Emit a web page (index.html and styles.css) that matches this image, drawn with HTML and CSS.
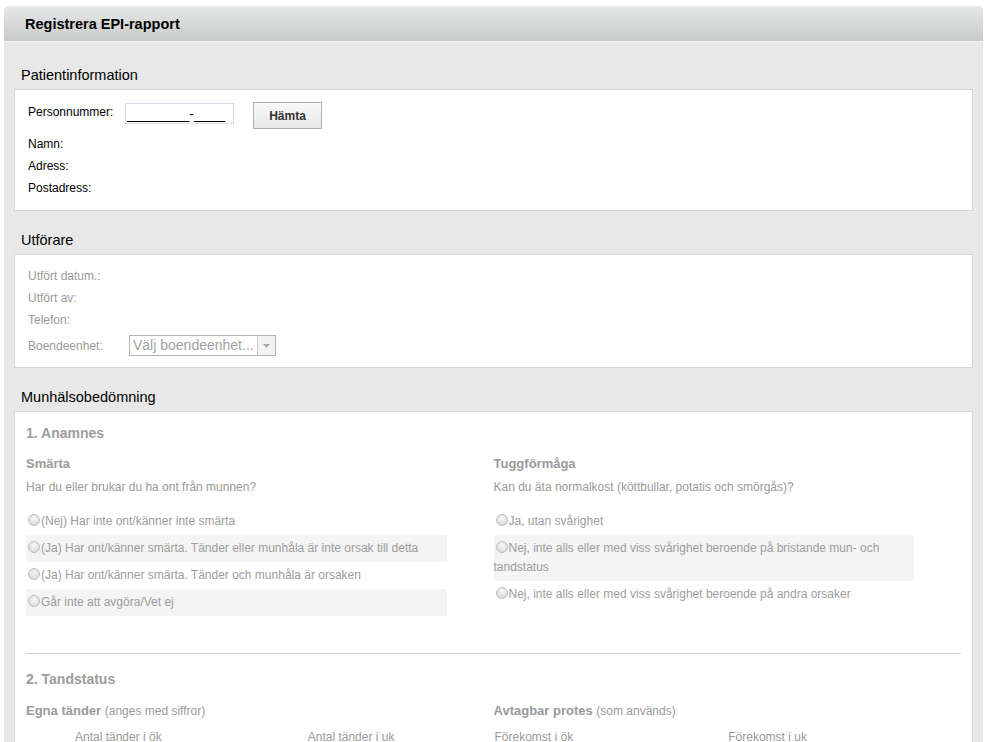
FILE: index.html
```html
<!DOCTYPE html>
<html lang="sv">
<head>
<meta charset="utf-8">
<title>Registrera EPI-rapport</title>
<link rel="stylesheet" href="styles.css">
</head>
<body>
<div class="panel">
  <div class="panel-header">Registrera EPI-rapport</div>
  <div class="panel-body">
    <h2 class="section-title first">Patientinformation</h2>
    <div class="box box-patient">
      <div class="pn-row">
        <label class="pn-label" for="pnr">Personnummer:</label>
        <input id="pnr" class="pn-input" type="text" value="________-____">
        <button class="btn" type="button">Hämta</button>
      </div>
      <div class="info-line">Namn:</div>
      <div class="info-line">Adress:</div>
      <div class="info-line">Postadress:</div>
    </div>

    <h2 class="section-title">Utförare</h2>
    <div class="box box-performer">
      <div class="info-line muted">Utfört datum.:</div>
      <div class="info-line muted">Utfört av:</div>
      <div class="info-line muted">Telefon:</div>
      <div class="unit-row">
        <span class="unit-label">Boendeenhet:</span>
        <div class="select">
          <span class="select-text">Välj boendeenhet...</span>
          <span class="select-arrow"><svg width="7" height="4" viewBox="0 0 7 4"><path d="M0 0H7L3.5 4Z" fill="#a8a8a8"/></svg></span>
        </div>
      </div>
    </div>

    <h2 class="section-title">Munhälsobedömning</h2>
    <div class="box box-assess">
      <h3 class="part-title">1. Anamnes</h3>
      <div class="cols">
        <div class="col">
          <h4 class="q-title">Smärta</h4>
          <p class="q-text">Har du eller brukar du ha ont från munnen?</p>
          <div class="options">
            <label class="opt"><input class="radio" type="radio" name="smarta">(Nej) Har inte ont/känner inte smärta</label>
            <label class="opt alt"><input class="radio" type="radio" name="smarta">(Ja) Har ont/känner smärta. Tänder eller munhåla är inte orsak till detta</label>
            <label class="opt"><input class="radio" type="radio" name="smarta">(Ja) Har ont/känner smärta. Tänder och munhåla är orsaken</label>
            <label class="opt alt"><input class="radio" type="radio" name="smarta">Går inte att avgöra/Vet ej</label>
          </div>
        </div>
        <div class="col">
          <h4 class="q-title">Tuggförmåga</h4>
          <p class="q-text">Kan du äta normalkost (köttbullar, potatis och smörgås)?</p>
          <div class="options">
            <label class="opt"><input class="radio" type="radio" name="tugg">Ja, utan svårighet</label>
            <label class="opt alt"><input class="radio" type="radio" name="tugg">Nej, inte alls eller med viss svårighet beroende på bristande mun- och tandstatus</label>
            <label class="opt"><input class="radio" type="radio" name="tugg">Nej, inte alls eller med viss svårighet beroende på andra orsaker</label>
          </div>
        </div>
      </div>

      <hr class="divider">

      <h3 class="part-title part-two">2. Tandstatus</h3>
      <div class="cols">
        <div class="col">
          <h4 class="q-title q-title-two">Egna tänder <span class="hint">(anges med siffror)</span></h4>
          <div class="sub-cols indented">
            <div class="sub">
              <div class="sub-label">Antal tänder i ök</div>
              <input class="num-input" type="text">
            </div>
            <div class="sub">
              <div class="sub-label">Antal tänder i uk</div>
              <input class="num-input" type="text">
            </div>
          </div>
        </div>
        <div class="col">
          <h4 class="q-title q-title-two">Avtagbar protes <span class="hint">(som används)</span></h4>
          <div class="sub-cols">
            <div class="sub">
              <div class="sub-label">Förekomst i ök</div>
              <input class="num-input" type="text">
            </div>
            <div class="sub">
              <div class="sub-label">Förekomst i uk</div>
              <input class="num-input" type="text">
            </div>
          </div>
        </div>
      </div>
    </div>
  </div>
</div>
</body>
</html>
```

FILE: styles.css
```css
* {
  box-sizing: border-box;
}

body {
  margin: 0;
  background: #ffffff;
  font-family: "Liberation Sans", Arial, sans-serif;
  font-size: 12px;
  color: #000;
}

.panel {
  margin: 6px 0 0 4px;
  width: 979px;
}

.panel-header {
  height: 36px;
  padding-left: 21px;
  border-radius: 5px 5px 0 0;
  background: linear-gradient(to bottom, #e6e7e7 0%, #d6d7d7 55%, #c8c9c9 100%);
  border-bottom: 1px solid #f2f2f2;
  font-weight: bold;
  font-size: 14.5px;
  line-height: 36px;
  color: #000;
}

.panel-body {
  background: #e8e8e8;
  padding: 0 10px 20px;
}

.section-title {
  margin: 0;
  padding: 20px 7px 5px;
  font-size: 14.5px;
  font-weight: normal;
  line-height: 18px;
  color: #000;
}

.section-title.first {
  padding-top: 24px;
}

.box {
  background: #ffffff;
  border: 1px solid #d6d6d6;
}

/* Patient info */
.box-patient {
  padding: 12px 13px 11px;
}

.pn-row {
  display: flex;
  align-items: flex-start;
  margin-bottom: 4px;
}

.pn-label {
  width: 97px;
  padding-top: 2px;
  line-height: 16px;
}

.pn-input {
  margin-top: 1px;
  width: 109px;
  height: 21px;
  padding: 0 1px;
  border: 1px solid #d5dde6;
  font-family: "Liberation Sans", Arial, sans-serif;
  font-size: 14px;
  color: #000;
  background: #fff;
}

.btn {
  margin-left: 19px;
  width: 69px;
  height: 27px;
  border: 1px solid #adadad;
  background: linear-gradient(to bottom, #f9f9f9, #e9e9e9);
  font-family: "Liberation Sans", Arial, sans-serif;
  font-size: 12px;
  font-weight: bold;
  color: #333;
  padding: 0;
}

.info-line {
  line-height: 22px;
}

.info-line.muted,
.unit-label {
  color: #9a9a9a;
}

/* Performer */
.box-performer {
  padding: 10px 13px 11px;
}

.unit-row {
  display: flex;
  align-items: center;
  margin-top: 4px;
}

.unit-label {
  width: 101px;
}

.select {
  display: flex;
  width: 147px;
  height: 21px;
  border: 1px solid #b4b4b4;
  background: #fff;
}

.select-text {
  flex: 1;
  padding-left: 3px;
  font-size: 14px;
  line-height: 19px;
  color: #a2a2a2;
  white-space: nowrap;
  overflow: hidden;
}

.select-arrow {
  width: 18px;
  border-left: 1px solid #c8c8c8;
  background: #f2f2f2;
  display: flex;
  align-items: center;
  justify-content: center;
}

/* Assessment */
.box-assess {
  padding: 12px 11px 200px;
}

.part-title {
  margin: 0;
  font-size: 14px;
  font-weight: bold;
  line-height: 18px;
  color: #9d9d9d;
}

.part-two {
  margin-top: 16px;
}

.cols {
  display: flex;
}

.col {
  flex: 1 1 0;
  min-width: 0;
}

.q-title {
  margin: 13px 0 0;
  font-size: 13px;
  font-weight: bold;
  line-height: 18px;
  color: #9a9a9a;
}

.q-title-two {
  margin-top: 14px;
}

.hint {
  font-size: 12px;
  font-weight: normal;
}

.q-text {
  margin: 5px 0 0;
  line-height: 18px;
  color: #9a9a9a;
}

.options {
  margin-top: 12px;
  width: 90%;
}

.opt {
  display: block;
  padding: 4px 0;
  line-height: 19px;
  color: #9d9d9d;
}

.opt.alt {
  background: #f4f4f4;
}

.radio {
  -webkit-appearance: none;
  appearance: none;
  display: inline-block;
  width: 12px;
  height: 12px;
  margin: 0 1px 0 2px;
  vertical-align: -1px;
  border: 1px solid #bcbcbc;
  border-radius: 50%;
  background: radial-gradient(circle at 50% 35%, #f6f6f6 0%, #e2e2e2 60%, #cfcfcf 100%);
}

.divider {
  margin: 37px 0 0;
  border: 0;
  border-top: 1px solid #d0d0d0;
  height: 0;
}

.sub-cols {
  display: flex;
  margin-top: 8px;
}

.sub {
  flex: 1 1 0;
}

.sub-cols .sub {
  padding-left: 1px;
}

.sub-cols.indented .sub {
  padding-left: 49px;
}

.sub-cols.indented .sub + .sub {
  padding-left: 47px;
}

.sub-label {
  line-height: 18px;
  color: #9a9a9a;
}

.num-input {
  margin-top: 6px;
  width: 60px;
  height: 21px;
  border: 1px solid #c8c8c8;
}
```
